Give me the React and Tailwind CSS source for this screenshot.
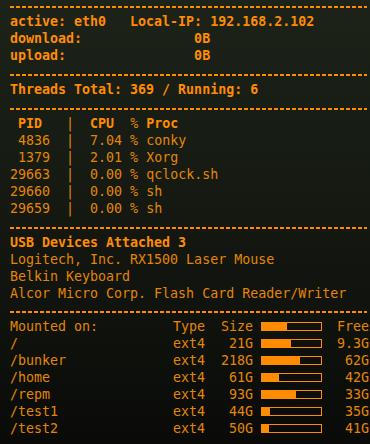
const procs = [
  { pid: ' 4836', cpu: '7.04', name: 'conky' },
  { pid: ' 1379', cpu: '2.01', name: 'Xorg' },
  { pid: '29663', cpu: '0.00', name: 'qclock.sh' },
  { pid: '29660', cpu: '0.00', name: 'sh' },
  { pid: '29659', cpu: '0.00', name: 'sh' },
];

const usb = [
  'Logitech, Inc. RX1500 Laser Mouse',
  'Belkin Keyboard',
  'Alcor Micro Corp. Flash Card Reader/Writer',
];

const mounts = [
  { dir: '/', type: 'ext4', size: '21G', used: 29, free: '9.3G' },
  { dir: '/bunker', type: 'ext4', size: '218G', used: 38, free: '62G' },
  { dir: '/home', type: 'ext4', size: '61G', used: 17, free: '42G' },
  { dir: '/repm', type: 'ext4', size: '93G', used: 34, free: '33G' },
  { dir: '/test1', type: 'ext4', size: '44G', used: 8, free: '35G' },
  { dir: '/test2', type: 'ext4', size: '50G', used: 7, free: '41G' },
];

function Dash({ top = 'mt-[10px]' }) {
  return (
    <div
      className={`${top} mb-[5px] h-[2px] w-[357px]`}
      style={{ backgroundImage: 'repeating-linear-gradient(to right, #ff8c00 0 4px, transparent 4px 6px)' }}
    />
  );
}

function Bar({ used }) {
  return (
    <div className="w-[61px] h-[9px] border border-[#ff8c00] ml-[8px]">
      <div className="h-full bg-[#ff8c00]" style={{ width: used + 'px' }} />
    </div>
  );
}

export default function App() {
  return (
    <div
      className="w-[370px] h-[444px] overflow-hidden pl-[10px] pt-[6px] bg-gradient-to-b from-[#1d2319] via-[#141811] to-[#0a0b09] text-[#e38600] text-[13.3px] leading-[17px] whitespace-pre"
      style={{ fontFamily: '"DejaVu Sans Mono", monospace' }}
    >
      <Dash top="mt-0" />
      <div className="font-bold text-[#ff8c00]">
        <div>active: eth0   Local-IP: 192.168.2.102</div>
        <div>download:              0B</div>
        <div>upload:                0B</div>
      </div>

      <Dash />
      <div className="font-bold text-[#ff8c00]">Threads Total: 369 / Running: 6</div>

      <Dash />
      <div>
        {' '}<b className="text-[#ff8c00]">PID</b>{'   |  '}<b className="text-[#ff8c00]">CPU</b>{'  % '}<b className="text-[#ff8c00]">Proc</b>
      </div>
      {procs.map(p => (
        <div key={p.pid}>{p.pid}  |  {p.cpu} % {p.name}</div>
      ))}

      <Dash />
      <div className="font-bold text-[#ff8c00]">USB Devices Attached 3</div>
      {usb.map(u => (
        <div key={u}>{u}</div>
      ))}

      <Dash top="mt-[9px]" />
      <div className="flex items-center">
        <div className="w-[163px]">Mounted on:</div>
        <div className="w-[80px] flex justify-between"><span>Type</span><span>Size</span></div>
        <Bar used={25} />
        <div className="w-[47px] text-right">Free</div>
      </div>
      {mounts.map(m => (
        <div key={m.dir} className="flex items-center">
          <div className="w-[163px]">{m.dir}</div>
          <div className="w-[80px] flex justify-between"><span>{m.type}</span><span>{m.size}</span></div>
          <Bar used={m.used} />
          <div className="w-[47px] text-right">{m.free}</div>
        </div>
      ))}
    </div>
  );
}
